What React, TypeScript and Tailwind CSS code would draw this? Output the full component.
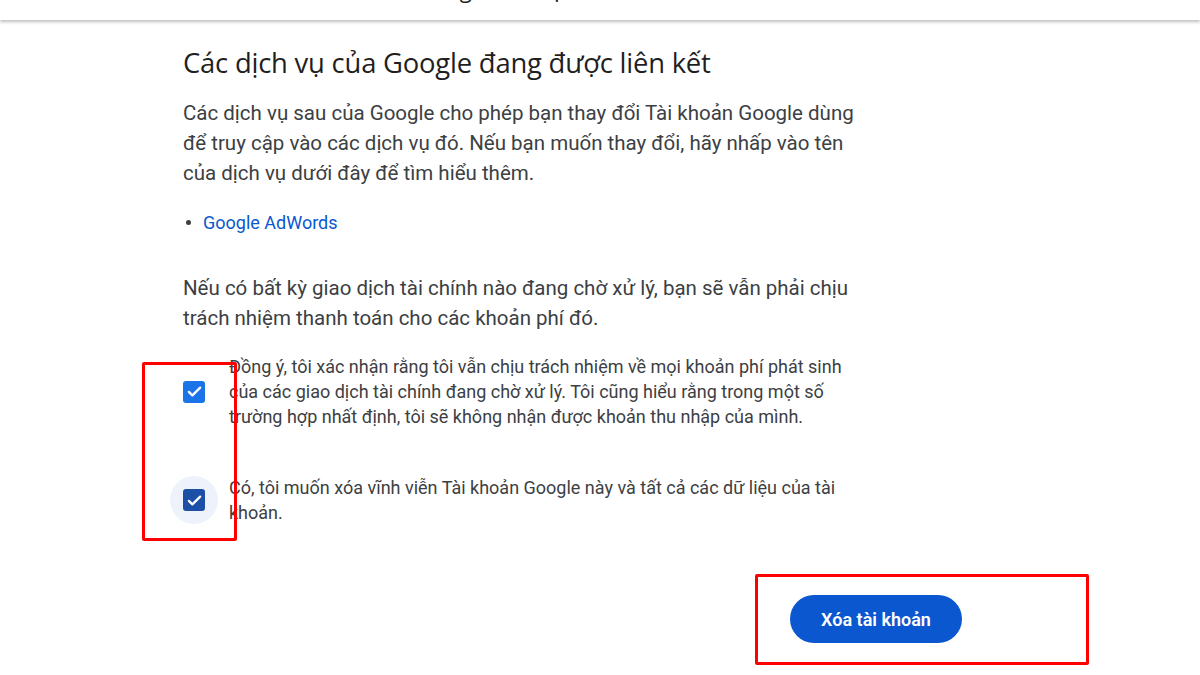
import React from "react";

function Check({ dark }: { dark?: boolean }) {
  return (
    <div
      className={`w-[22px] h-[22px] rounded-[3px] flex items-center justify-center ${dark ? "bg-[#1c4fa6]" : "bg-[#1a73e8]"}`}
    >
      <svg width="17" height="17" viewBox="0 0 24 24" fill="none">
        <path d="M4 12.5l5 5L20 6.5" stroke="white" strokeWidth="3.2" strokeLinecap="round" strokeLinejoin="round" />
      </svg>
    </div>
  );
}

export default function App() {
  return (
    <div className="relative w-[1200px] h-[675px] bg-white overflow-hidden" style={{ fontFamily: "Roboto, 'Noto Sans', sans-serif" }}>
      <div className="h-[20px] bg-white overflow-hidden shadow-[0_2px_3px_rgba(0,0,0,0.25)] relative z-10">
        <div
          className="mt-[-25px] ml-[268px] text-[22px] leading-[28px] text-[#1f1f1f]"
          style={{ fontFamily: "'Open Sans', sans-serif" }}
        >
          Xóa Tài khoản Google của bạn
        </div>
      </div>

      <div className="ml-[183px] w-[779px] pt-[25px]">
        <h1
          className="text-[27.4px] leading-[36px] text-[#1f1f1f] tracking-[-0.2px]"
          style={{ fontFamily: "'Open Sans', sans-serif" }}
        >
          Các dịch vụ của Google đang được liên kết
        </h1>
        <p className="mt-[17px] w-[690px] text-[20.5px] leading-[30px] text-[#3c4043]">
          Các dịch vụ sau của Google cho phép bạn thay đổi Tài khoản Google dùng để truy cập vào các dịch vụ đó. Nếu bạn muốn thay đổi, hãy nhấp vào tên của dịch vụ dưới đây để tìm hiểu thêm.
        </p>
        <ul className="mt-[22px]">
          <li className="flex items-center h-[24px]">
            <span className="w-[5px] h-[5px] rounded-full bg-[#3c4043] ml-[3px]" />
            <span className="ml-[12px] text-[18px] text-[#0b57d0]">Google AdWords</span>
          </li>
        </ul>
        <p className="mt-[39px] w-[690px] text-[20.5px] leading-[30px] text-[#3c4043]">
          Nếu có bất kỳ giao dịch tài chính nào đang chờ xử lý, bạn sẽ vẫn phải chịu trách nhiệm thanh toán cho các khoản phí đó.
        </p>

        <div className="mt-[21px] flex items-center ml-[-13px]">
          <div className="w-[48px] h-[48px] shrink-0 flex items-center justify-center">
            <Check />
          </div>
          <p className="ml-[11px] w-[630px] text-[18px] leading-[25px] text-[#3c4043]">
            Đồng ý, tôi xác nhận rằng tôi vẫn chịu trách nhiệm về mọi khoản phí phát sinh của các giao dịch tài chính đang chờ xử lý. Tôi cũng hiểu rằng trong một số trường hợp nhất định, tôi sẽ không nhận được khoản thu nhập của mình.
          </p>
        </div>

        <div className="mt-[46px] flex items-center ml-[-13px]">
          <div className="w-[48px] h-[48px] shrink-0 rounded-full bg-[#eef3fb] flex items-center justify-center">
            <Check dark />
          </div>
          <p className="ml-[11px] w-[630px] text-[18px] leading-[25px] text-[#3c4043]">
            Có, tôi muốn xóa vĩnh viễn Tài khoản Google này và tất cả các dữ liệu của tài khoản.
          </p>
        </div>

        <div className="mt-[70px] flex justify-end">
          <button className="w-[172px] h-[48px] rounded-full bg-[#0b57d0] text-white text-[18px] font-semibold">
            Xóa tài khoản
          </button>
        </div>
      </div>

      <div className="absolute left-[142px] top-[362px] w-[95px] h-[179px] border-[3px] border-[#ff0000] rounded-[2px]" />
      <div className="absolute left-[755px] top-[574px] w-[334px] h-[91px] border-[3px] border-[#ff0000] rounded-[2px]" />
    </div>
  );
}
